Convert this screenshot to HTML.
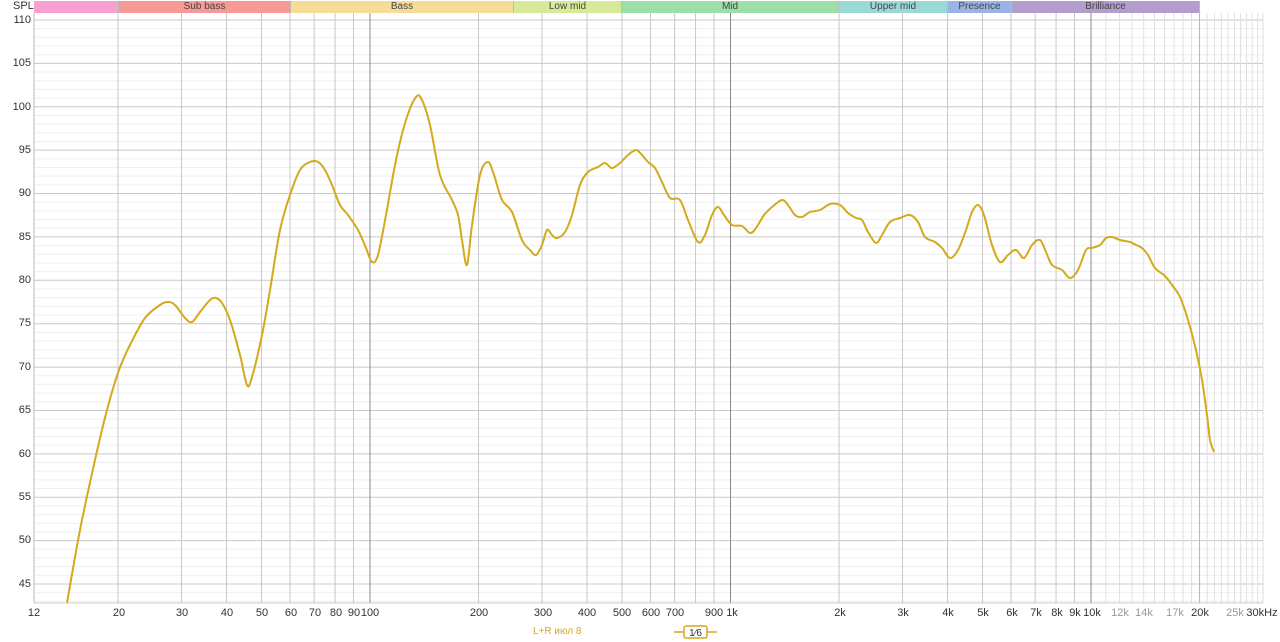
<!DOCTYPE html>
<html><head><meta charset="utf-8"><style>
body{margin:0;width:1280px;height:642px;background:#fff;overflow:hidden;position:relative;font-family:"Liberation Sans",sans-serif}
.t{position:absolute;font-size:11px;color:#333;transform:translateX(-50%);top:607px}
.y{position:absolute;left:0;width:31px;text-align:right;font-size:11px;color:#333}
.b{position:absolute;top:1px;height:12px;font-size:10px;color:#444;text-align:center;line-height:12px;border-right:1px solid #bbb;box-sizing:border-box}
.g{color:#999}
</style></head><body>
<div style="position:absolute;left:13px;top:0;font-size:11px;color:#333">SPL</div>
<div class="b" style="left:34px;width:85px;background:#f9a0d2"></div>
<div class="b" style="left:119px;width:172px;background:#f79a96">Sub bass</div>
<div class="b" style="left:291px;width:223px;background:#f7dc98">Bass</div>
<div class="b" style="left:514px;width:108px;background:#d7ea98">Low mid</div>
<div class="b" style="left:622px;width:217px;background:#9ddfa8">Mid</div>
<div class="b" style="left:839px;width:109px;background:#9ad9d6">Upper mid</div>
<div class="b" style="left:948px;width:64px;background:#99b4e4">Presence</div>
<div class="b" style="left:1012px;width:188px;background:#b39dcc">Brilliance</div>
<div class="y" style="top:14px">110</div><div class="y" style="top:57px">105</div><div class="y" style="top:101px">100</div><div class="y" style="top:144px">95</div><div class="y" style="top:187px">90</div><div class="y" style="top:231px">85</div><div class="y" style="top:274px">80</div><div class="y" style="top:317px">75</div><div class="y" style="top:361px">70</div><div class="y" style="top:404px">65</div><div class="y" style="top:448px">60</div><div class="y" style="top:491px">55</div><div class="y" style="top:534px">50</div><div class="y" style="top:578px">45</div>
<svg id="s" width="1280" height="642" style="position:absolute;left:0;top:0">
<g id="grid"></g>
<polyline id="pl" fill="none" stroke="#d4a91c" stroke-width="2" stroke-linejoin="round" points="67,603 80,530 95,460 107,410 119,370 130,345 145,318 160,305 168,302 175,305 185,318 192,322 200,312 210,300 216,298 222,303 230,320 240,355 247,385 252,377 262,335 270,290 280,230 290,195 300,170 310,162 318,162 325,170 332,185 340,205 348,215 358,230 366,248 372,262 378,255 386,215 396,160 406,120 416,97 422,100 430,125 440,175 452,200 458,215 462,240 467,265 472,225 480,175 488,162 494,175 502,200 512,212 522,240 530,250 536,255 542,245 547,230 552,235 557,238 565,232 572,215 580,185 588,172 598,167 605,163 612,168 620,163 628,155 636,150 642,155 648,162 655,168 662,182 670,198 680,200 688,220 698,242 705,235 712,215 718,207 724,215 732,225 742,226 750,233 756,228 764,215 772,207 782,200 788,205 795,215 802,217 810,212 820,210 830,204 840,205 848,213 856,218 862,220 868,232 876,243 882,235 890,222 900,218 910,215 918,222 925,237 935,242 942,248 950,258 958,250 966,230 972,212 978,205 984,215 992,245 1000,262 1008,255 1016,250 1024,258 1032,245 1040,240 1046,252 1052,265 1062,270 1070,278 1078,270 1086,250 1092,248 1100,245 1106,238 1112,237 1120,240 1130,242 1136,245 1142,248 1148,255 1155,268 1165,276 1172,285 1180,297 1188,320 1196,350 1202,380 1207,415 1210,440 1214,452"/>
<line x1="674" y1="632" x2="684" y2="632" stroke="#d4a91c" stroke-width="1.5"/><line x1="707" y1="632" x2="717" y2="632" stroke="#d4a91c" stroke-width="1.5"/>
<rect x="684" y="626" width="23" height="12" rx="2" fill="#fff" stroke="#d4a91c" stroke-width="1.5"/>
<text x="695.5" y="636" font-size="10" text-anchor="middle" fill="#333" font-family="Liberation Sans">1⁄6</text>
</svg>
<script>
var g=document.getElementById('grid'),h='';
function X(f){return 370+360.5*Math.log10(f/100)}
for(var v=43;v<=110;v++){var y=20+(110-v)*8.677;h+='<line x1="34" x2="1263" y1="'+y+'" y2="'+y+'" stroke="'+(v%5==0?'#c8c8c8':'#efefef')+'" stroke-width="1"/>';}
var fs=[];[10,100,1000,10000].forEach(function(d){for(var m=1;m<10;m++)fs.push(d*m)});
for(var f=10000;f<=30000;f+=1000)fs.push(f);
fs.forEach(function(f){var x=X(f);if(x<34||x>1264)return;var c='#c8c8c8';if(f==100||f==1000||f==10000)c='#888';else if(f>10000&&f%10000)c='#e0e0e0';else if(f==20000)c='#b8b8b8';h+='<line x1="'+x+'" x2="'+x+'" y1="13" y2="603" stroke="'+c+'" stroke-width="1"/>';});
h+='<line x1="34" x2="34" y1="13" y2="603" stroke="#bbb"/><line x1="1263" x2="1263" y1="13" y2="603" stroke="#ddd"/><line x1="34" x2="1263" y1="603" y2="603" stroke="#ccc"/>';
g.innerHTML=h;
var pl=document.getElementById('pl');var p=pl.getAttribute('points').trim().split(/\s+/).map(function(s){return s.split(',').map(Number)});
var d='M'+p[0][0]+','+p[0][1];
for(var i=0;i<p.length-1;i++){var a=p[i-1]||p[i],b=p[i],c=p[i+1],e=p[i+2]||c;
d+=' C'+(b[0]+(c[0]-a[0])/6)+','+(b[1]+(c[1]-a[1])/6)+' '+(c[0]-(e[0]-b[0])/6)+','+(c[1]-(e[1]-b[1])/6)+' '+c[0]+','+c[1];}
var np=document.createElementNS('http://www.w3.org/2000/svg','path');np.setAttribute('d',d);np.setAttribute('fill','none');np.setAttribute('stroke','#d4a91c');np.setAttribute('stroke-width','2');
pl.parentNode.replaceChild(np,pl);
</script>
<div class="t" style="left:34px">12</div><div class="t" style="left:119px">20</div><div class="t" style="left:182px">30</div><div class="t" style="left:227px">40</div><div class="t" style="left:262px">50</div><div class="t" style="left:291px">60</div><div class="t" style="left:315px">70</div><div class="t" style="left:336px">80</div><div class="t" style="left:354px">90</div><div class="t" style="left:370px">100</div><div class="t" style="left:479px">200</div><div class="t" style="left:543px">300</div><div class="t" style="left:587px">400</div><div class="t" style="left:622px">500</div><div class="t" style="left:651px">600</div><div class="t" style="left:675px">700</div><div class="t" style="left:714px">900</div><div class="t" style="left:732px">1k</div><div class="t" style="left:840px">2k</div><div class="t" style="left:903px">3k</div><div class="t" style="left:948px">4k</div><div class="t" style="left:983px">5k</div><div class="t" style="left:1012px">6k</div><div class="t" style="left:1036px">7k</div><div class="t" style="left:1057px">8k</div><div class="t" style="left:1075px">9k</div><div class="t" style="left:1092px">10k</div><div class="t g" style="left:1120px">12k</div><div class="t g" style="left:1144px">14k</div><div class="t g" style="left:1175px">17k</div><div class="t" style="left:1200px">20k</div><div class="t g" style="left:1235px">25k</div><div class="t" style="left:1262px">30kHz</div>
<div style="position:absolute;left:533px;top:626px;font-size:10px;color:#d9a520">L+R июл 8</div>
</body></html>
